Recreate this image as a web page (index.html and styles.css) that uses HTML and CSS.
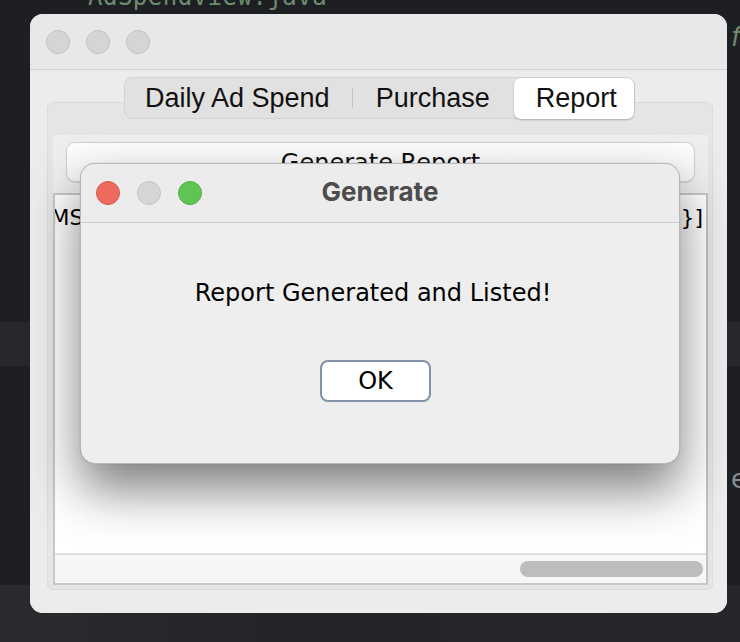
FILE: index.html
```html
<!DOCTYPE html>
<html>
<head>
<meta charset="utf-8">
<link rel="stylesheet" href="styles.css">
</head>
<body>
<div class="desktop">
  <div class="editor-line top-line">AdSpendView.java</div>
  <div class="editor-glyph glyph-f">f</div>
  <div class="editor-glyph glyph-e">e</div>
  <div class="band band-left"></div>
  <div class="band band-right"></div>
  <div class="editor-footer"></div>

  <div class="window">
    <div class="titlebar">
      <span class="light gray"></span>
      <span class="light gray"></span>
      <span class="light gray"></span>
    </div>
    <div class="window-body">
      <div class="segmented">
        <div class="seg first">Daily Ad Spend</div>
        <div class="seg-sep"></div>
        <div class="seg">Purchase</div>
        <div class="seg selected">Report</div>
      </div>
      <div class="tab-panel">
        <div class="tab-content">
          <div class="gen-button">Generate Report</div>
          <div class="scroll-pane">
            <div class="text-row">
              <span class="text-left">[MS</span>
              <span class="text-right">3}]</span>
            </div>
            <div class="scroll-spacer"></div>
            <div class="hscroll">
              <div class="thumb"></div>
            </div>
          </div>
        </div>
      </div>
    </div>

    <div class="dialog">
      <div class="dialog-title">
        <div class="lights">
          <span class="light red"></span>
          <span class="light gray"></span>
          <span class="light green"></span>
        </div>
        <div class="dialog-name">Generate</div>
      </div>
      <div class="dialog-body">
        <div class="message">Report Generated and Listed!</div>
        <div class="ok-button">OK</div>
      </div>
    </div>
  </div>
</div>
</body>
</html>
```

FILE: styles.css
```css
html, body {
  margin: 0;
  padding: 0;
  background: #1e1f22;
}
.desktop {
  position: relative;
  width: 740px;
  height: 642px;
  overflow: hidden;
  background: #1e1f22;
  font-family: "DejaVu Sans", sans-serif;
}
.editor-line {
  position: absolute;
  left: 88px;
  top: -17px;
  font-family: "DejaVu Sans Mono", monospace;
  font-size: 24px;
  color: #6f8b6f;
  letter-spacing: 0.5px;
}
.editor-glyph {
  position: absolute;
  left: 731px;
  font-family: "DejaVu Sans", sans-serif;
  font-size: 26px;
  color: #6f8b6f;
}
.glyph-f { top: 22px; font-style: italic; }
.glyph-e { top: 464px; color: #8a8c90; }
.band {
  position: absolute;
  top: 322px;
  height: 44px;
  background: #26282c;
}
.band-left { left: 0; width: 30px; }
.band-right { left: 727px; width: 13px; }
.editor-footer {
  position: absolute;
  left: 0;
  top: 585px;
  width: 740px;
  height: 57px;
  background: linear-gradient(90deg, #2a2b2f 0%, #232428 40%, #26272a 100%);
}

.window {
  position: absolute;
  left: 30px;
  top: 14px;
  width: 697px;
  height: 599px;
  border-radius: 13px;
  background: #ececec;
  overflow: hidden;
  display: flex;
  flex-direction: column;
}
.titlebar {
  height: 56px;
  box-sizing: border-box;
  border-bottom: 1px solid #d2d2d2;
  background: #e8e8e8;
  display: flex;
  align-items: center;
  gap: 16px;
  padding-left: 16px;
}
.light {
  width: 24px;
  height: 24px;
  border-radius: 50%;
  box-sizing: border-box;
  display: inline-block;
}
.light.gray { background: #d5d5d5; border: 1px solid #c2c2c2; }
.light.red { background: #ee6a5e; border: 1px solid #d65a4f; }
.light.green { background: #5fc454; border: 1px solid #4fae45; }

.window-body {
  flex: 1;
  display: flex;
  flex-direction: column;
  padding: 7px 14px 23px 17px;
  background: #ececec;
}
.segmented {
  align-self: flex-start;
  margin-left: 77px;
  display: flex;
  align-items: center;
  height: 42px;
  box-sizing: border-box;
  background: #e1e1e1;
  border: 1px solid #d3d3d3;
  border-radius: 8px;
  position: relative;
  z-index: 2;
  font-family: "Liberation Sans", sans-serif;
  font-size: 27px;
  color: #111;
}
.seg {
  padding: 0 24px 0 23px;
  height: 100%;
  display: flex;
  align-items: center;
}
.seg.first { padding-left: 20px; padding-right: 22px; }
.seg-sep {
  width: 1px;
  height: 20px;
  background: #c4c4c4;
}
.seg.selected {
  background: #fff;
  border-radius: 7px;
  box-shadow: 0 1px 2px rgba(0,0,0,0.25);
  height: 41px;
  padding: 0 17px 0 22px;
}
.tab-panel {
  flex: 1;
  margin-top: -17px;
  background: #e5e5e5;
  border: 1px solid #dadada;
  border-radius: 6px;
  padding: 32px 4px 4px 5px;
  display: flex;
  flex-direction: column;
}
.tab-content {
  flex: 1;
  background: #eeeeee;
  display: flex;
  flex-direction: column;
  padding-top: 7px;
}
.gen-button {
  margin: 0 13px;
  height: 40px;
  box-sizing: border-box;
  background: linear-gradient(#fdfdfd, #f6f6f6);
  border: 1px solid #d0d0d0;
  border-radius: 9px;
  box-shadow: 0 1px 1px rgba(0,0,0,0.12);
  text-align: center;
  font-family: "DejaVu Sans", sans-serif;
  font-size: 24px;
  line-height: 40px;
  color: #111;
}
.scroll-pane {
  flex: 1;
  margin-top: 11px;
  border: 2px solid #c8c8c8;
  border-right-color: #c2c2c2;
  background: #ffffff;
  display: flex;
  flex-direction: column;
  overflow: hidden;
}
.text-row {
  display: flex;
  justify-content: space-between;
  font-family: "DejaVu Sans", sans-serif;
  font-size: 22px;
  color: #000;
  height: 28px;
  line-height: 28px;
  margin-top: 9px;
  overflow: hidden;
}
.text-left { margin-left: -13px; }
.text-right { margin-right: 3px; }
.scroll-spacer { flex: 1; }
.hscroll {
  height: 28px;
  border-top: 2px solid #dedede;
  background: #f6f6f6;
  display: flex;
  justify-content: flex-end;
  align-items: center;
  padding-right: 3px;
}
.thumb {
  width: 183px;
  height: 16px;
  border-radius: 8px;
  background: #bdbdbd;
}

.dialog {
  position: absolute;
  left: 50px;
  top: 149px;
  width: 600px;
  height: 301px;
  box-sizing: border-box;
  border: 1px solid #b8b8b8;
  border-radius: 15px;
  background: #eeeeee;
  box-shadow: 0 26px 50px rgba(0,0,0,0.5), 0 0 1px rgba(0,0,0,0.3);
  display: flex;
  flex-direction: column;
  overflow: hidden;
  z-index: 5;
}
.dialog-title {
  height: 59px;
  box-sizing: border-box;
  border-bottom: 1px solid #cfcfcf;
  background: #ececec;
  position: relative;
  display: flex;
  align-items: center;
}
.lights {
  display: flex;
  gap: 17px;
  padding-left: 15px;
}
.dialog-name {
  position: absolute;
  left: 0;
  right: 0;
  top: 0;
  bottom: 3px;
  display: flex;
  align-items: center;
  justify-content: center;
  font-family: "Inter", sans-serif;
  font-weight: 700;
  font-size: 26px;
  color: #4c4c4c;
}
.dialog-body {
  flex: 1;
  display: flex;
  flex-direction: column;
  align-items: center;
  padding-top: 56px;
}
.message {
  font-family: "DejaVu Sans", sans-serif;
  font-size: 24px;
  color: #000;
  margin-right: 14px;
}
.ok-button {
  margin-top: 53px;
  margin-right: 9px;
  width: 111px;
  height: 42px;
  box-sizing: border-box;
  border: 2px solid #8293a8;
  border-radius: 8px;
  background: #fff;
  text-align: center;
  font-family: "DejaVu Sans", sans-serif;
  font-size: 24px;
  line-height: 38px;
  color: #000;
}
```
